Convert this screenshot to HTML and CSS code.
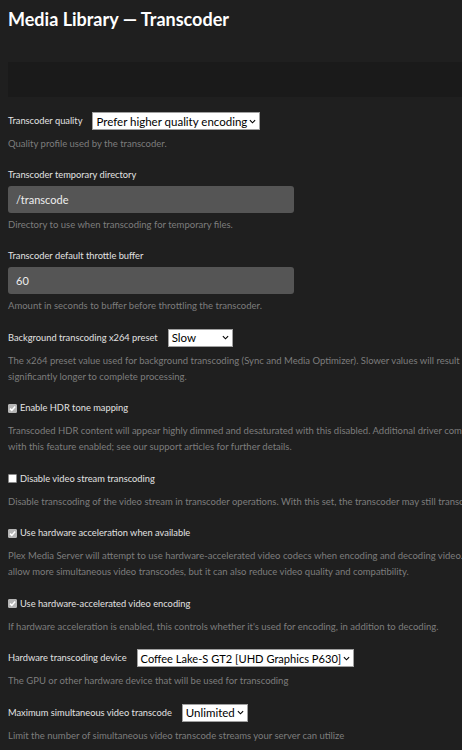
FILE: index.html
```html
<!DOCTYPE html>
<html lang="en">
<head>
<meta charset="utf-8">
<title>Media Library — Transcoder</title>
<link rel="stylesheet" href="styles.css">
</head>
<body>
<div class="page">
  <h1 class="title">Media Library — Transcoder</h1>
  <div class="notice"></div>

  <div class="setting">
    <div class="row">
      <span class="label">Transcoder quality</span>
      <div class="select"><span class="select-text">Prefer higher quality encoding</span><svg class="chev" viewBox="0 0 8 5" width="7" height="5"><path d="M1 1l3 3 3-3" fill="none" stroke="#000" stroke-width="1.3"/></svg></div>
    </div>
    <p class="help">Quality profile used by the transcoder.</p>
  </div>

  <div class="setting">
    <div class="label label-block">Transcoder temporary directory</div>
    <div class="input">/transcode</div>
    <p class="help help-tight">Directory to use when transcoding for temporary files.</p>
  </div>

  <div class="setting">
    <div class="label label-block">Transcoder default throttle buffer</div>
    <div class="input">60</div>
    <p class="help help-tight">Amount in seconds to buffer before throttling the transcoder.</p>
  </div>

  <div class="setting">
    <div class="row">
      <span class="label">Background transcoding x264 preset</span>
      <div class="select select-preset"><span class="select-text">Slow</span><svg class="chev" viewBox="0 0 8 5" width="7" height="5"><path d="M1 1l3 3 3-3" fill="none" stroke="#000" stroke-width="1.3"/></svg></div>
    </div>
    <p class="help">The x264 preset value used for background transcoding (Sync and Media Optimizer). Slower values will result in better video quality and smaller file sizes, but will take significantly longer to complete processing.</p>
  </div>

  <div class="setting">
    <div class="row">
      <span class="check checked"><svg viewBox="0 0 9 9" width="9" height="9"><path d="M2 4.6l1.8 1.8L7.2 2.4" fill="none" stroke="#fff" stroke-width="1.5"/></svg></span>
      <span class="label">Enable HDR tone mapping</span>
    </div>
    <p class="help">Transcoded HDR content will appear highly dimmed and desaturated with this disabled. Additional driver components may be required and transcoding may be slower with this feature enabled; see our support articles for further details.</p>
  </div>

  <div class="setting">
    <div class="row">
      <span class="check"></span>
      <span class="label">Disable video stream transcoding</span>
    </div>
    <p class="help">Disable transcoding of the video stream in transcoder operations. With this set, the transcoder may still transcode audio and subtitles.</p>
  </div>

  <div class="setting">
    <div class="row">
      <span class="check checked"><svg viewBox="0 0 9 9" width="9" height="9"><path d="M2 4.6l1.8 1.8L7.2 2.4" fill="none" stroke="#fff" stroke-width="1.5"/></svg></span>
      <span class="label">Use hardware acceleration when available</span>
    </div>
    <p class="help">Plex Media Server will attempt to use hardware-accelerated video codecs when encoding and decoding video. Hardware acceleration can make transcoding faster and allow more simultaneous video transcodes, but it can also reduce video quality and compatibility.</p>
  </div>

  <div class="setting">
    <div class="row">
      <span class="check checked"><svg viewBox="0 0 9 9" width="9" height="9"><path d="M2 4.6l1.8 1.8L7.2 2.4" fill="none" stroke="#fff" stroke-width="1.5"/></svg></span>
      <span class="label">Use hardware-accelerated video encoding</span>
    </div>
    <p class="help">If hardware acceleration is enabled, this controls whether it's used for encoding, in addition to decoding.</p>
  </div>

  <div class="setting">
    <div class="row">
      <span class="label">Hardware transcoding device</span>
      <div class="select select-device"><span class="select-text">Coffee Lake-S GT2 [UHD Graphics P630]</span><svg class="chev" viewBox="0 0 8 5" width="7" height="5"><path d="M1 1l3 3 3-3" fill="none" stroke="#000" stroke-width="1.3"/></svg></div>
    </div>
    <p class="help">The GPU or other hardware device that will be used for transcoding</p>
  </div>

  <div class="setting">
    <div class="row">
      <span class="label">Maximum simultaneous video transcode</span>
      <div class="select"><span class="select-text">Unlimited</span><svg class="chev" viewBox="0 0 8 5" width="7" height="5"><path d="M1 1l3 3 3-3" fill="none" stroke="#000" stroke-width="1.3"/></svg></div>
    </div>
    <p class="help">Limit the number of simultaneous video transcode streams your server can utilize</p>
  </div>
</div>
</body>
</html>
```

FILE: styles.css
```css
html, body {
  margin: 0;
  padding: 0;
  background: #1f1f1f;
  overflow: hidden;
}

body {
  font-family: Lato, "Liberation Sans", sans-serif;
  color: #dcdcdc;
}

.page {
  width: 700px;
  padding: 7px 0 0 8px;
}

.title {
  margin: 0;
  font-size: 18px;
  line-height: 24px;
  font-weight: 700;
  color: #ffffff;
}

.notice {
  margin-top: 31px;
  height: 35px;
  background: #1a1a1a;
  margin-bottom: 15px;
}

.setting {
  margin-bottom: 14.5px;
}

.row {
  display: flex;
  align-items: center;
  height: 18px;
}

.label {
  font-size: 9.3px;
  line-height: 16px;
  color: #e2e2e2;
}

.label-block {
  margin-bottom: 3px;
}

.select {
  margin-left: 10px;
  height: 18px;
  box-sizing: border-box;
  background: #ffffff;
  border: 1px solid #a0a0a0;
  display: flex;
  align-items: center;
  padding: 0 3px;
  gap: 2px;
  color: #000;
  font-size: 11.5px;
}

.select-text {
  flex: 1;
  white-space: nowrap;
}

.select-preset {
  width: 65px;
}

.select-device {
  font-size: 11.1px;
}

.chev {
  flex: none;
}

.input {
  width: 286px;
  height: 27px;
  box-sizing: border-box;
  background: #555555;
  border-radius: 3px;
  padding: 0 8px;
  display: flex;
  align-items: center;
  font-size: 11px;
  color: #eeeeee;
}

.help {
  margin: 6px 0 0 0;
  font-size: 9.5px;
  line-height: 16px;
  color: #7d7d7d;
}

.help-tight {
  margin-top: 4.5px;
}

.check {
  width: 9px;
  height: 9px;
  box-sizing: border-box;
  background: #ffffff;
  border: 1px solid #8a8a8a;
  border-radius: 1px;
  margin-right: 3px;
  display: flex;
}

.check.checked {
  background: #b4b4b4;
  border-color: #b4b4b4;
}

.check svg {
  margin: -1px;
}
```
